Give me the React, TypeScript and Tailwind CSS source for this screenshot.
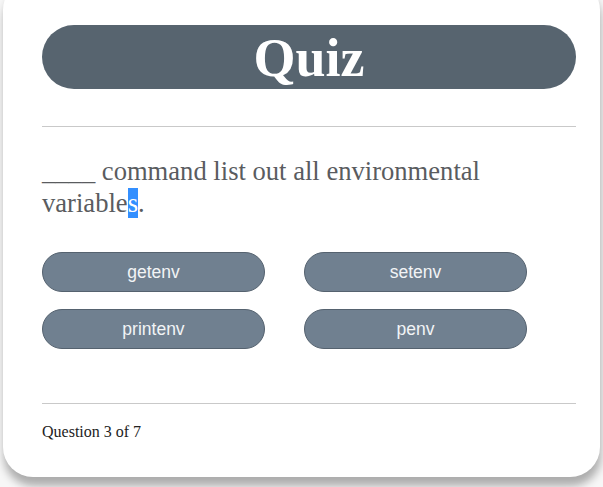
import React from "react";

const serif = { fontFamily: '"Liberation Serif", "Times New Roman", serif' };

function Option({ label }: { label: string }) {
  return (
    <button
      className="w-[223px] h-[40px] rounded-full bg-[#708090] border border-[#55626f] text-[#f2f4f6] text-[17.5px] flex items-center justify-center"
      style={{ fontFamily: '"Liberation Sans", Arial, sans-serif' }}
    >
      {label}
    </button>
  );
}

export default function App() {
  return (
    <div className="w-[603px] h-[487px] bg-[#f7f7f7] overflow-hidden">
      <div className="mx-[3px] -mt-[20px] h-[497px] bg-white rounded-[30px] shadow-[1px_9px_8px_rgba(0,0,0,0.3)] pl-[39px] pr-[24px] pt-[45px]">
        <div
          className="h-[64px] rounded-full bg-[#57646f] flex items-center justify-center text-white font-bold text-[54px] leading-none"
          style={serif}
        >
          <span className="pt-[2px]">Quiz</span>
        </div>
        <div className="mt-[37px] h-[1px] bg-[#c9c9c9]" />
        <p className="mt-[28px] text-[26.6px] leading-[32px] text-[#5a5c5f] w-[470px]" style={serif}>
          ____ command list out all environmental variable<span className="bg-[#338fff] text-white">s</span>.
        </p>
        <div className="mt-[33px] grid grid-cols-[223px_223px] gap-x-[39px] gap-y-[17px]">
          <Option label="getenv" />
          <Option label="setenv" />
          <Option label="printenv" />
          <Option label="penv" />
        </div>
        <div className="mt-[54px] h-[1px] bg-[#c9c9c9]" />
        <p className="mt-[19px] text-[16px] leading-[18px] text-[#222]" style={serif}>
          Question 3 of 7
        </p>
      </div>
    </div>
  );
}
